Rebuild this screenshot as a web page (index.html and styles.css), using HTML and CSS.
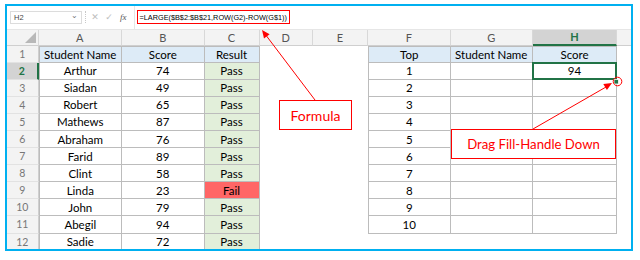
FILE: index.html
```html
<!DOCTYPE html>
<html>
<head>
<meta charset="utf-8">
<link rel="stylesheet" href="styles.css">
</head>
<body>
<div class="frame">
  <div class="fbar">
    <div class="namebox"><span>H2</span><span class="dd">&#8964;</span></div>
    <div class="sep"></div>
    <span class="ic">&#10005;</span><span class="ic">&#10003;</span><span class="fx">fx</span>
    <div class="input"><div class="formula">=LARGE($B$2:$B$21,ROW(G2)-ROW(G$1))</div></div>
  </div>
  <div class="sheet">
    <div class="ch corner"><span class="tri"></span></div><div class="ch">A</div><div class="ch">B</div><div class="ch">C</div><div class="ch">D</div><div class="ch">E</div><div class="ch">F</div><div class="ch">G</div><div class="ch act">H</div><div class="ch last"></div>

    <div class="rh">1</div><div class="c l t hd">Student Name</div><div class="c t hd">Score</div><div class="c t hd">Result</div><div></div><div></div><div class="c l t hd">Top</div><div class="c t hd">Student Name</div><div class="c t hd">Score</div><div></div>

    <div class="rh act">2</div><div class="c l">Arthur</div><div class="c">74</div><div class="c g">Pass</div><div></div><div></div><div class="c l">1</div><div class="c"></div><div class="c sel">94</div><div></div>

    <div class="rh">3</div><div class="c l">Siadan</div><div class="c">49</div><div class="c g">Pass</div><div></div><div></div><div class="c l">2</div><div class="c"></div><div class="c"></div><div></div>

    <div class="rh">4</div><div class="c l">Robert</div><div class="c">65</div><div class="c g">Pass</div><div></div><div></div><div class="c l">3</div><div class="c"></div><div class="c"></div><div></div>

    <div class="rh">5</div><div class="c l">Mathews</div><div class="c">87</div><div class="c g">Pass</div><div></div><div></div><div class="c l">4</div><div class="c"></div><div class="c"></div><div></div>

    <div class="rh">6</div><div class="c l">Abraham</div><div class="c">76</div><div class="c g">Pass</div><div></div><div></div><div class="c l">5</div><div class="c"></div><div class="c"></div><div></div>

    <div class="rh">7</div><div class="c l">Farid</div><div class="c">89</div><div class="c g">Pass</div><div></div><div></div><div class="c l">6</div><div class="c"></div><div class="c"></div><div></div>

    <div class="rh">8</div><div class="c l">Clint</div><div class="c">58</div><div class="c g">Pass</div><div></div><div></div><div class="c l">7</div><div class="c"></div><div class="c"></div><div></div>

    <div class="rh">9</div><div class="c l">Linda</div><div class="c">23</div><div class="c fail">Fail</div><div></div><div></div><div class="c l">8</div><div class="c"></div><div class="c"></div><div></div>

    <div class="rh">10</div><div class="c l">John</div><div class="c">79</div><div class="c g">Pass</div><div></div><div></div><div class="c l">9</div><div class="c"></div><div class="c"></div><div></div>

    <div class="rh">11</div><div class="c l">Abegil</div><div class="c">94</div><div class="c g">Pass</div><div></div><div></div><div class="c l">10</div><div class="c"></div><div class="c"></div><div></div>

    <div class="rh">12</div><div class="c l">Sadie</div><div class="c">72</div><div class="c g">Pass</div><div></div><div></div><div></div><div></div><div></div><div></div>
  </div>
</div>

<svg class="overlay" width="640" height="260" viewBox="0 0 640 260">
  <line x1="315" y1="100" x2="265" y2="34" stroke="#ff0000" stroke-width="1"/>
  <polygon points="262,30 269.6,34.3 264,38.5" fill="#ff0000"/>
  <line x1="533" y1="129" x2="606" y2="87" stroke="#ff0000" stroke-width="1"/>
  <polygon points="612,83 606.9,90 603.3,84" fill="#ff0000"/>
  <rect x="614" y="79.5" width="4.5" height="4.5" fill="#217346" stroke="#ffffff" stroke-width="0.8"/>
  <circle cx="617.5" cy="81.5" r="4.3" fill="none" stroke="#ff0000" stroke-width="1"/>
</svg>

<div class="note n1">Formula</div>
<div class="note n2">Drag Fill-Handle Down</div>
</body>
</html>
```

FILE: styles.css
```css
* { box-sizing: border-box; }
html, body { margin: 0; background: #fff; }
body {
  position: relative;
  width: 640px;
  height: 260px;
  overflow: hidden;
  font-family: Lato, "Liberation Sans", sans-serif;
}
.frame {
  margin: 4px 0 0 5px;
  width: 628px;
  height: 247px;
  border: 2px solid #00b0f0;
  overflow: hidden;
  background: #fff;
}
.fbar {
  height: 23.5px;
  display: flex;
  align-items: center;
  border-bottom: 1px solid #e6e6e6;
}
.namebox {
  margin-left: 3px;
  width: 72px;
  height: 13px;
  border: 1px solid #dcdcdc;
  display: flex;
  align-items: center;
  justify-content: space-between;
  padding: 0 3px 0 3px;
  font-family: "Liberation Sans", sans-serif;
  font-size: 7.5px;
  color: #444;
}
.namebox .dd { font-size: 8px; color: #777; line-height: 6px; margin-top: -3px; }
.sep {
  width: 0;
  height: 12px;
  margin-left: 3px;
  border-left: 1px dotted #c8c8c8;
}
.ic {
  width: 14px;
  margin-left: 2px;
  text-align: center;
  color: #bdbdbd;
  font-family: "DejaVu Sans", sans-serif;
  font-size: 9px;
}
.ic + .ic { margin-left: 0; }
.fx {
  margin-left: 4px;
  width: 14px;
  font-family: "Liberation Serif", serif;
  font-style: italic;
  font-size: 9px;
  color: #555;
}
.input {
  flex: 1;
  height: 100%;
  display: flex;
  align-items: center;
  padding-left: 2px;
  border-left: 1px solid #e6e6e6;
}
.formula {
  width: 153px;
  height: 14px;
  border: 1.5px solid #ff0000;
  padding-left: 1.5px;
  display: flex;
  align-items: center;
  font-family: "Liberation Sans", sans-serif;
  font-size: 7.3px;
  color: #000;
  white-space: nowrap;
}
.sheet {
  display: grid;
  grid-template-columns: 31.5px 83.5px 82.5px 55px 53.5px 55px 82.5px 82.5px 84px 14px;
  grid-template-rows: 16px repeat(12, 17.1px);
  font-size: 11.5px;
  color: #000;
}
.sheet > div {
  display: flex;
  align-items: center;
  justify-content: center;
  white-space: nowrap;
}
.ch {
  background: #f3f3f3;
  color: #555;
  font-size: 11px;
  border-right: 1px solid #d8d8d8;
  border-bottom: 1px solid #cfcfcf;
}
.ch.act {
  background: #d3d3d3;
  color: #217346;
  font-weight: bold;
  border-bottom: 2px solid #217346;
}
.ch.last { border-right: none; }
.corner { position: relative; }
.tri {
  position: absolute;
  right: 2px;
  bottom: 2px;
  width: 0;
  height: 0;
  border-left: 11px solid transparent;
  border-bottom: 11px solid #b8b8b8;
}
.rh {
  background: #f3f3f3;
  color: #777;
  font-size: 10.5px;
  border-right: 1px solid #cfcfcf;
  border-bottom: 1px solid #e2e2e2;
}
.rh.act {
  background: #d3d3d3;
  color: #217346;
  font-weight: bold;
  border-right: 2px solid #217346;
}
.c {
  border-right: 1px solid #bcbcbc;
  border-bottom: 1px solid #bcbcbc;
}
.c.l { border-left: 1px solid #bcbcbc; }
.c.t { border-top: 1px solid #bcbcbc; }
.hd { background: #ddebf7; }
.g { background: #e2efda; }
.fail { background: #ff6666; }
.sel { position: relative; }
.sel::after {
  content: "";
  position: absolute;
  left: -1px;
  top: -1px;
  right: -1px;
  bottom: -1px;
  border: 2px solid #217346;
}
.overlay {
  position: absolute;
  left: 0;
  top: 0;
  pointer-events: none;
}
.note {
  position: absolute;
  background: #fff;
  border: 1.5px solid #ff0000;
  color: #ff0000;
  font-size: 14px;
  display: flex;
  align-items: center;
  justify-content: center;
  white-space: nowrap;
}
.n1 { left: 279px; top: 100px; width: 73px; height: 30px; }
.n2 { left: 451px; top: 129px; width: 165px; height: 30px; font-size: 13.2px; }
```
